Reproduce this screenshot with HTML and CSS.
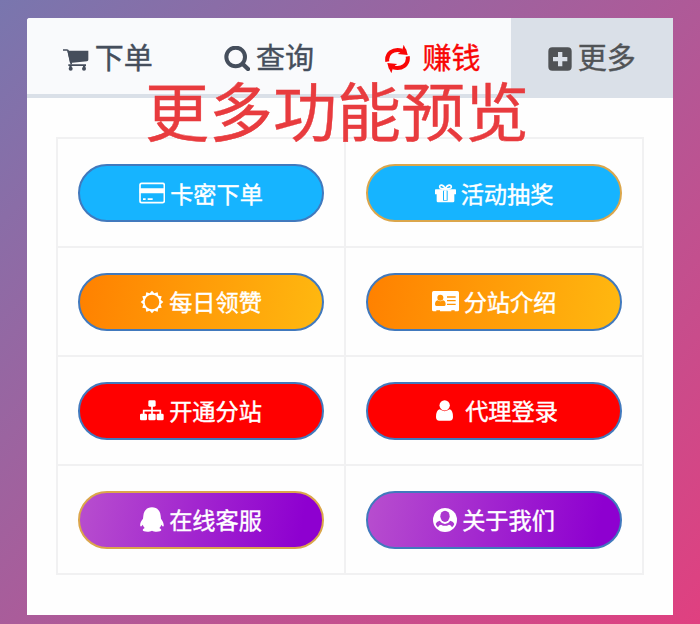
FILE: index.html
```html
<!DOCTYPE html>
<html lang="zh-CN">
<head>
<meta charset="utf-8">
<title>更多功能预览</title>
<link rel="stylesheet" href="styles.css">
</head>
<body>
<main class="card">
  <nav class="tabs">
    <a class="tab"><svg class="icon cart" width="26" height="23" viewBox="189 144 78 69"><path d="M189 150h12q3 0 4 4l9 39" fill="none" stroke="currentColor" stroke-width="5"/><path d="M202 152h63v27q0 4-4 5l-51 5zM205 193h53v5h-53z"/><path d="M208 197h7v6h-7zM249 197h7v6h-7z"/><circle cx="212" cy="206" r="6"/><circle cx="252" cy="206" r="6"/></svg><span>下单</span></a>
    <a class="tab"><svg class="icon" width="26" height="25" viewBox="671 141 78 75"><circle cx="706" cy="174" r="28" fill="none" stroke="currentColor" stroke-width="12"/><path d="M727 195l16 15" fill="none" stroke="currentColor" stroke-width="13" stroke-linecap="round"/></svg><span>查询</span></a>
    <a class="tab tab-earn"><svg class="icon" width="25" height="28" viewBox="107 134 75 84"><g id="arc"><path d="M114 184C110 160 131 143 158 151" fill="none" stroke="currentColor" stroke-width="12"/><path d="M163 133q3 9 8 15l4 16-30-3q7-3 10-8 6-7 8-20z"/></g><use href="#arc" transform="rotate(180 144.500 176)"/></svg><span>赚钱</span></a>
    <a class="tab tab-more"><svg class="icon" width="24" height="24" viewBox="593 141 72 72"><path fill-rule="evenodd" d="M606 142h46q12 0 12 12v46q0 12-12 12h-46q-12 0-12-12v-46q0-12 12-12zm17 14v15h-15v13h15v15h13v-15h15v-13h-15v-15z"/></svg><span>更多</span></a>
  </nav>
  <h1 class="title">更多功能预览</h1>
  <section class="grid">
    <div class="cell"><a class="btn blue"><svg class="icon" width="26" height="22" viewBox="267 100 78 66"><rect x="270" y="104" width="73" height="58" rx="5" fill="none" stroke="currentColor" stroke-width="5"/><path d="M269 119h75v15h-75zM279 149h8v5h-8zM293 149h15v5h-15z"/></svg><span>卡密下单</span></a></div>
    <div class="cell"><a class="btn blue gold-line"><svg class="icon gift" width="21" height="19" viewBox="252 105 63 57"><path d="M254 121h59q2 0 2 2v13h-5v20q0 4-4 4h-45q-4 0-4-4v-20h-5v-13q0-2 2-2z"/><path class="ribbon" d="M276 125h14v30h-14z"/><path d="M279 125h8v28h-8z"/><path d="M283 120c-6-15-17-14-17-6 0 5 6 6 17 6 11 0 18-1 18-6 0-8-12-9-18 6z" fill="none" stroke="currentColor" stroke-width="5"/></svg><span>活动抽奖</span></a></div>
    <div class="cell"><a class="btn orange"><svg class="icon" width="24" height="24" viewBox="-36 -36 72 72"><path fill-rule="evenodd" d="M34 0L26 7 29 17 19 19 17 29 7 26 0 34-7 26-17 29-19 19-29 17-26 7-34 0-26-7-29-17-19-19-17-29-7-26 0-34 7-26 17-29 19-19 29-17 26-7zM22 0a22 22 0 1 0-44 0 22 22 0 1 0 44 0z"/></svg><span>每日领赞</span></a></div>
    <div class="cell"><a class="btn orange"><svg class="icon card-id" width="27" height="21" viewBox="243 99 81 63"><path d="M248 99h71q5 0 5 5v51q0 5-5 5h-8v-3h-10v3h-34v-3h-11v3h-8q-5 0-5-5v-51q0-5 5-5z"/><g class="cutout"><circle cx="268" cy="119" r="9"/><path d="M260 127q8 6 16 0 8 2 8 12 0 5-4 5h-24q-4 0-4-5 0-10 8-12zM288 115h26v4h-26zM288 126h26v4h-26zM288 137h26v4h-26z"/></g></svg><span>分站介绍</span></a></div>
    <div class="cell"><a class="btn red"><svg class="icon" width="24" height="21" viewBox="270 96 72 63"><rect x="295" y="97" width="22" height="19" rx="4"/><path d="M281 140v-12h50v12M306 114v26" fill="none" stroke="currentColor" stroke-width="5"/><rect x="270" y="137" width="21" height="20" rx="4"/><rect x="295" y="137" width="22" height="20" rx="4"/><rect x="320" y="137" width="21" height="20" rx="4"/></svg><span>开通分站</span></a></div>
    <div class="cell"><a class="btn red wide-gap"><svg class="icon" width="17" height="21" viewBox="258 96 51 63"><circle cx="284" cy="112" r="15.500"/><path d="M269 124q15 11 30 0 10 3 10 23 0 11-10 11h-31q-10 0-10-11 0-20 11-23z"/></svg><span>代理登录</span></a></div>
    <div class="cell"><a class="btn purple gold-line"><svg class="icon" width="24" height="25" viewBox="270 85 72 75"><path d="M306 86c16 0 25 11 26 25l1 9c6 8 9 15 8 22-1 3-4 1-7-4q-2 7-6 10 6 3 6 6c0 5-19 7-28 2-9 5-28 3-28-2q0-3 6-6-4-4-6-10c-3 5-6 7-7 4-2-7 2-15 8-22l1-9c1-14 10-25 26-25z"/></svg><span>在线客服</span></a></div>
    <div class="cell"><a class="btn purple"><svg class="icon" width="24" height="24" viewBox="248 87 72 72"><circle cx="284" cy="123" r="36"/><g class="hole"><ellipse cx="284" cy="112" rx="14" ry="17"/><path d="M256 135q2-8 12-10 7 10 16 10t16-10q10 2 12 10-3 7-7 10-3-8-9-8-12 7-24 0-6 0-9 8-4-3-7-10z"/></g></svg><span>关于我们</span></a></div>
  </section>
</main>
</body>
</html>
```
FILE: styles.css
```css
* { box-sizing: border-box; }

body {
  margin: 0;
  width: 700px;
  height: 624px;
  overflow: hidden;
  padding: 18px 27px 9px;
  background: linear-gradient(135deg, #7976ae 0%, #ac5b99 50%, #e04080 100%);
  font-family: "Noto Sans CJK SC", sans-serif;
}

.card {
  position: relative;
  width: 645.5px;
  height: 597px;
  background: #fefefe;
  border-radius: 3px 3px 0 0;
}

.tabs {
  display: grid;
  grid-template-columns: repeat(4, 1fr);
  height: 80px;
  background: #f9fafc;
  border-bottom: 4px solid #dae0e8;
  border-radius: 3px 3px 0 0;
}

.tab {
  display: flex;
  align-items: center;
  justify-content: center;
  gap: 6px;
  height: 80px;
  color: #454e5c;
  font-size: 29px;
  line-height: 40px;
  -webkit-text-stroke: 0.4px currentColor;
}

.tab span { margin-top: -4px; }

.tab .icon {
  margin-top: 1px;
  -webkit-text-stroke: 0;
}

.tab .cart { margin-top: 3px; }

.tab-earn {
  gap: 12px;
  padding-left: 5px;
  color: #f90606;
}

.tab-more {
  background: #dae0e8;
  color: #505356;
}

.icon {
  display: block;
  flex: none;
  fill: currentColor;
}

.title {
  position: absolute;
  top: 48px;
  left: 118px;
  margin: 0;
  color: #e83b3e;
  font-size: 64px;
  font-weight: 400;
  line-height: 84px;
  white-space: nowrap;
  -webkit-text-stroke: 0.4px currentColor;
}

.grid {
  display: grid;
  grid-template-columns: 286px 296px;
  grid-template-rows: repeat(4, 106.9px);
  gap: 2px;
  width: 588px;
  margin: 39px 0 0 29px;
  padding: 2px;
  background: #f1f1f2;
}

.cell {
  padding: 25px 20px 24px;
  background: #fefefe;
}

.btn {
  display: flex;
  align-items: center;
  justify-content: center;
  gap: 5px;
  height: 58px;
  border: 2px solid #4179bd;
  border-radius: 29px;
  color: #fff;
  font-size: 23.2px;
  line-height: 34px;
  -webkit-text-stroke: 0.4px currentColor;
}

.btn span { margin-top: -1px; }

.blue { background: #16b4ff; }

.orange { background: linear-gradient(100deg, #ff8000, #ffb910) border-box; }

.red { background: #ff0000; }

.purple { background: linear-gradient(100deg, #b84fce, #8e00d0 90%) border-box; }

.gold-line { border-color: #dba64b; }

.wide-gap {
  gap: 12px;
  padding-left: 6px;
}

.ribbon { fill: #16b4ff; }

.cutout { fill: #ff9504; }

.hole { fill: #ab37cf; }
```
